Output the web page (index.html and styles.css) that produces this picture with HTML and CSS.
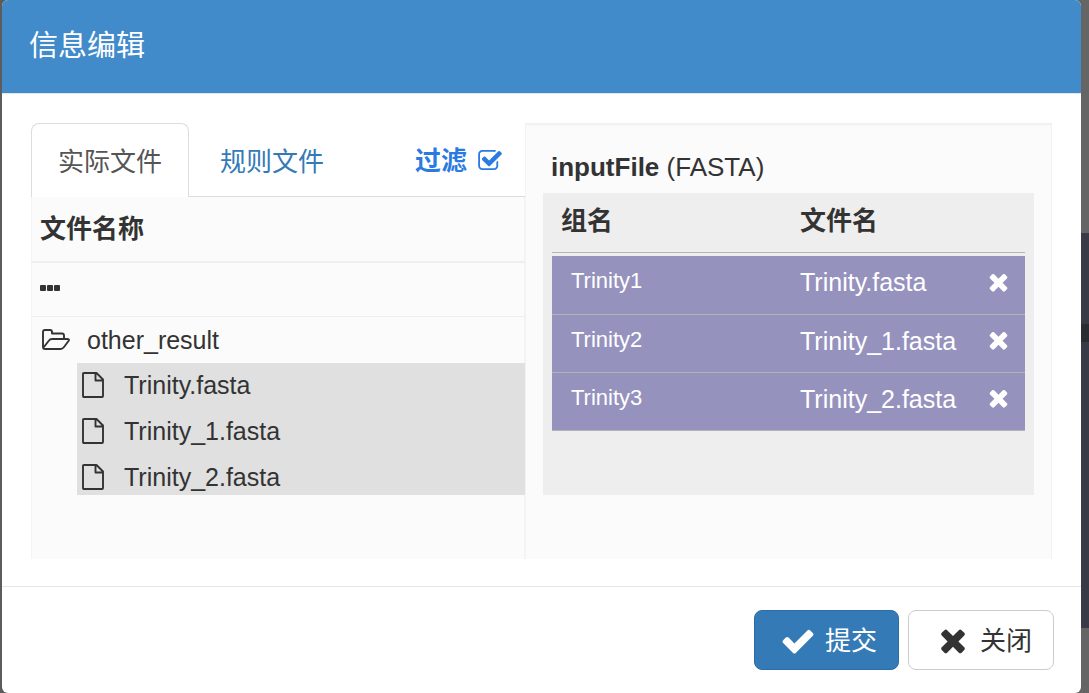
FILE: index.html
```html
<!DOCTYPE html>
<html lang="zh-CN">
<head>
<meta charset="utf-8">
<title>信息编辑</title>
<link rel="stylesheet" href="styles.css">
</head>
<body>
<svg class="sprite" aria-hidden="true">
  <symbol id="times" viewBox="0 0 1408 1408"><path d="M1298 1086q0 40-28 68l-136 136q-28 28-68 28t-68-28L704 996l-294 294q-28 28-68 28t-68-28l-136-136q-28-28-28-68t28-68l294-294-294-294q-28-28-28-68t28-68l136-136q28-28 68-28t68 28l294 294 294-294q28-28 68-28t68 28l136 136q28 28 28 68t-28 68L976 724l294 294q28 28 28 68z"/></symbol>
  <symbol id="check" viewBox="0 0 1792 1408"><path d="M1671 374q0 40-28 68L919 1166l-136 136q-28 28-68 28t-68-28l-136-136-362-362q-28-28-28-68t28-68l136-136q28-28 68-28t68 28l294 295 656-657q28-28 68-28t68 28l136 136q28 28 28 68z"/></symbol>
  <symbol id="file" viewBox="0 0 22 26"><path d="M1 2q0-1 1-1h12.500l6.500 6.500V24q0 1-1 1H2q-1 0-1-1zM13.500 1v7.500h7.500" fill="none" stroke="currentColor" stroke-width="1.900" stroke-linejoin="round"/></symbol>
</svg>
<main class="modal">
  <header class="modal-header"><h1>信息编辑</h1></header>
  <div class="modal-body">
    <section class="source">
      <nav class="tabs">
        <a class="tab active" href="#actual">实际文件</a>
        <a class="tab" href="#rules">规则文件</a>
        <button class="filter" type="button">过滤
          <svg viewBox="64 128 1664 1408" aria-hidden="true"><path d="M1472 930v318q0 119-84.500 203.500t-203.500 84.500h-832q-119 0-203.500-84.500t-84.500-203.500v-832q0-119 84.500-203.500t203.500-84.500h832q63 0 117 25 15 7 18 23 3 17-9 29l-49 49q-10 10-23 10-3 0-9-2-23-6-45-6h-832q-66 0-113 47t-47 113v832q0 66 47 113t113 47h832q66 0 113-47t47-113v-254q0-13 9-22l64-64q10-10 23-10 6 0 12 3 20 8 20 29zm231-489l-814 814q-24 24-57 24t-57-24l-430-430q-24-24-24-57t24-57l110-110q24-24 57-24t57 24l263 263 647-647q24-24 57-24t57 24l110 110q24 24 24 57t-24 57z"/></svg>
        </button>
      </nav>
      <div class="files">
        <h2>文件名称</h2>
        <div class="parent"><button type="button" aria-label="上级目录"><i></i><i></i><i></i></button></div>
        <div class="folder">
          <svg viewBox="0 0 28 21" aria-hidden="true"><path d="M1 18V3q0-2 2-2h5q2 0 2 2v1.500h10q2 0 2 2V10M1.500 18.500 7 11.500q1-1.500 3-1.500h15q3 0 1.500 2L22 18q-1.500 2-3.500 2H3q-2 0-2-2" fill="none" stroke="currentColor" stroke-width="1.900" stroke-linejoin="round"/></svg>
          <span>other_result</span>
        </div>
        <ul class="file-list">
          <li><svg><use href="#file"/></svg>Trinity.fasta</li>
          <li><svg><use href="#file"/></svg>Trinity_1.fasta</li>
          <li><svg><use href="#file"/></svg>Trinity_2.fasta</li>
        </ul>
      </div>
    </section>
    <section class="target">
      <h3><b>inputFile</b> (FASTA)</h3>
      <div class="group-box">
        <table>
          <thead><tr><th class="group">组名</th><th>文件名</th><th class="action"></th></tr></thead>
          <tbody>
            <tr><td class="group">Trinity1</td><td>Trinity.fasta</td><td class="action"><button type="button" aria-label="移除"><svg><use href="#times"/></svg></button></td></tr>
            <tr><td class="group">Trinity2</td><td>Trinity_1.fasta</td><td class="action"><button type="button" aria-label="移除"><svg><use href="#times"/></svg></button></td></tr>
            <tr><td class="group">Trinity3</td><td>Trinity_2.fasta</td><td class="action"><button type="button" aria-label="移除"><svg><use href="#times"/></svg></button></td></tr>
          </tbody>
        </table>
      </div>
    </section>
  </div>
  <footer class="modal-footer">
    <button class="btn primary" type="button"><svg><use href="#check"/></svg>提交</button>
    <button class="btn" type="button"><svg><use href="#times"/></svg>关闭</button>
  </footer>
</main>
</body>
</html>
```

FILE: styles.css
```css
* { box-sizing: border-box; }
body {
  margin: 0;
  min-height: 100vh;
  padding: 0 8px 0 2px;
  display: flex;
  background: linear-gradient(90deg, #5c5c5c 50%, transparent 50%), linear-gradient(#656565 233px, #393a45 233px 324px, #2b2b32 324px 342px, #393a45 342px 628px, #656565 628px);
  color: #333;
  font: 26px/36px "Liberation Sans", "Noto Sans CJK SC", sans-serif;
}
h1, h2, h3, ul { margin: 0; padding: 0; font-size: inherit; }
button { margin: 0; padding: 0; border: 0; background: none; color: inherit; font: inherit; cursor: pointer; }
svg { fill: currentColor; flex: none; }
.sprite { position: absolute; width: 0; height: 0; }
.modal { flex: 1; display: flex; flex-direction: column; background: #fff; border-radius: 6px; overflow: hidden; }
.modal-header { padding: 24px 27px; background: #428bca; border-bottom: 1px solid #e5e5e5; color: #fff; }
.modal-header h1 { font-size: 29px; font-weight: 400; line-height: 45px; }
.modal-body { flex: 1; display: grid; grid-template-columns: 494fr 527fr; padding: 29px 29px 27px; }
.source { display: flex; flex-direction: column; }
.tabs { display: flex; border-bottom: 1px solid #ddd; }
.tab { padding: 20px 26px 16px; border: 1px solid transparent; border-bottom: 0; margin-right: 4px; color: #337ab7; text-decoration: none; }
.tab.active { margin-bottom: -1px; border-color: #ddd; border-radius: 8px 8px 0 0; background: #fff; color: #555; }
.filter { margin-left: auto; padding: 2px 23px 0 0; display: flex; align-items: center; gap: 11px; color: #2a7ae2; font-weight: 700; }
.filter svg { width: 24px; height: 20px; margin-bottom: 2px; }
.files { flex: 1; background: #fbfbfb; box-shadow: inset 1px 0 #f4f4f4, inset -1px 0 #f4f4f4; }
.files h2 { padding: 14px 9px; border-bottom: 2px solid #eee; }
.parent { padding: 20px 9px 23px; border-bottom: 1px solid #eee; }
.parent button { display: flex; gap: 1px; }
.parent i { width: 6px; height: 6px; margin: 2px 0; border-radius: 1px; background: #333; }
.folder { display: flex; align-items: center; gap: 17px; padding: 5px 11px; font-size: 25px; }
.folder svg { width: 28px; height: 21px; margin-bottom: 2px; }
.file-list { display: flex; flex-direction: column; gap: 10px; margin-left: 46px; padding: 4px 5px 0; background: #e0e0e0; font-size: 25px; list-style: none; }
.file-list li { display: flex; align-items: center; gap: 20px; }
.file-list svg { width: 22px; height: 26px; }
.target { padding: 26px 18px 64px; display: flex; flex-direction: column; background: #fbfbfb; box-shadow: inset 0 2px 2px #f0f0f0, inset 1px 0 #f4f4f4, inset -1px 0 #f4f4f4; }
.target h3 { padding: 0 8px 8px; font-weight: 400; }
.group-box { flex: 1; padding: 0 9px; background: #eee; }
table { width: 100%; border-collapse: separate; border-spacing: 0; table-layout: fixed; }
th { height: 60px; padding: 0 9px 4px; border-bottom: 1px solid #b3b3b3; text-align: left; }
td { height: 58px; padding: 0 9px 6px; border-bottom: 1px solid #b3b3b3; background: #9692be; color: #fff; font-size: 25px; }
tbody tr:first-child td { height: 59px; }
tbody::before { content: ""; display: block; height: 3px; }
.group { width: 239px; }
td.group { padding: 0 19px 8px; font-size: 22px; }
.action { width: 54px; }
td.action { padding: 0 0 6px 17px; }
.action button { display: flex; }
.action svg { width: 21px; height: 21px; }
.modal-footer { display: flex; justify-content: flex-end; gap: 9px; padding: 23px 27px; border-top: 1px solid #e5e5e5; }
.btn { display: flex; align-items: center; justify-content: flex-end; gap: 13px; width: 146px; height: 60px; padding: 2px 21px 0; border: 1px solid #ccc; border-radius: 8px; background: #fff; }
.btn svg { width: 28px; height: 28px; }
.btn.primary { gap: 9px; width: 145px; border-color: #2e6da4; background: #337ab7; color: #fff; }
.btn.primary svg { width: 36px; height: 28px; }
```
